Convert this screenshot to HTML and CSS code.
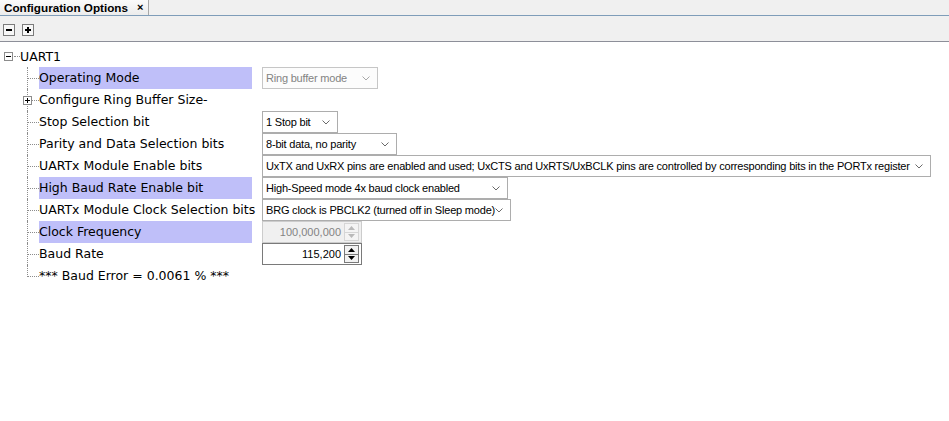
FILE: index.html
```html
<!DOCTYPE html>
<html>
<head>
<meta charset="utf-8">
<link rel="stylesheet" href="styles.css">
</head>
<body>
<div class="tabbar">
  <div class="tab"><span class="tab-title">Configuration Options</span><span class="tab-close">×</span></div>
</div>
<div class="toolbar">
  <span class="tb-btn"><svg width="12" height="12" viewBox="0 0 12 12"><rect x="0.5" y="0.5" width="11" height="11" fill="#f7f7f7" stroke="#7b7b7b"/><rect x="3" y="5" width="6" height="2" fill="#000"/></svg></span>
  <span class="tb-btn"><svg width="12" height="12" viewBox="0 0 12 12"><rect x="0.5" y="0.5" width="11" height="11" fill="#f7f7f7" stroke="#7b7b7b"/><rect x="3" y="5" width="6" height="2" fill="#000"/><rect x="5" y="3" width="2" height="6" fill="#000"/></svg></span>
</div>
<div class="tree">
  <div class="root">
    <span class="exp root-exp"><svg width="9" height="9" viewBox="0 0 9 9"><rect x="0.5" y="0.5" width="8" height="8" fill="#fff" stroke="#8c8c8c"/><rect x="2" y="4" width="5" height="1" fill="#000"/></svg></span>
    <span class="root-line"></span>
    <span class="root-label">UART1</span>
  </div>
  <div class="children">
    <div class="row">
      <span class="label hl">Operating Mode</span>
      <div class="combo disabled w-ring"><span class="combo-text">Ring buffer mode</span><svg class="chev" width="8" height="5" viewBox="0 0 8 5"><polyline points="0.5,0.5 4,4 7.5,0.5" fill="none" stroke="#a8a8a8"/></svg></div>
    </div>
    <div class="row">
      <span class="exp child-exp"><svg width="9" height="9" viewBox="0 0 9 9"><rect x="0.5" y="0.5" width="8" height="8" fill="#fff" stroke="#8c8c8c"/><rect x="2" y="4" width="5" height="1" fill="#000"/><rect x="4" y="2" width="1" height="5" fill="#000"/></svg></span>
      <span class="label">Configure Ring Buffer Size-</span>
    </div>
    <div class="row">
      <span class="label">Stop Selection bit</span>
      <div class="combo w-stop"><span class="combo-text">1 Stop bit</span><svg class="chev" width="8" height="5" viewBox="0 0 8 5"><polyline points="0.5,0.5 4,4 7.5,0.5" fill="none" stroke="#6a6a6a"/></svg></div>
    </div>
    <div class="row">
      <span class="label">Parity and Data Selection bits</span>
      <div class="combo w-parity"><span class="combo-text">8-bit data, no parity</span><svg class="chev" width="8" height="5" viewBox="0 0 8 5"><polyline points="0.5,0.5 4,4 7.5,0.5" fill="none" stroke="#6a6a6a"/></svg></div>
    </div>
    <div class="row">
      <span class="label">UARTx Module Enable bits</span>
      <div class="combo w-enable"><span class="combo-text">UxTX and UxRX pins are enabled and used; UxCTS and UxRTS/UxBCLK pins are controlled by corresponding bits in the PORTx register</span><svg class="chev" width="8" height="5" viewBox="0 0 8 5"><polyline points="0.5,0.5 4,4 7.5,0.5" fill="none" stroke="#6a6a6a"/></svg></div>
    </div>
    <div class="row">
      <span class="label hl">High Baud Rate Enable bit</span>
      <div class="combo w-baud"><span class="combo-text">High-Speed mode 4x baud clock enabled</span><svg class="chev" width="8" height="5" viewBox="0 0 8 5"><polyline points="0.5,0.5 4,4 7.5,0.5" fill="none" stroke="#6a6a6a"/></svg></div>
    </div>
    <div class="row">
      <span class="label">UARTx Module Clock Selection bits</span>
      <div class="combo w-brg"><span class="combo-text">BRG clock is PBCLK2 (turned off in Sleep mode)</span><svg class="chev" width="8" height="5" viewBox="0 0 8 5"><polyline points="0.5,0.5 4,4 7.5,0.5" fill="none" stroke="#6a6a6a"/></svg></div>
    </div>
    <div class="row">
      <span class="label hl">Clock Frequency</span>
      <div class="spin disabled">
        <span class="spin-text">100,000,000</span>
        <span class="spin-btns">
          <span class="spin-btn"><svg width="7" height="4" viewBox="0 0 7 4"><polygon points="3.5,0 7,4 0,4" fill="#b9b9b9"/></svg></span>
          <span class="spin-btn"><svg width="7" height="4" viewBox="0 0 7 4"><polygon points="0,0 7,0 3.5,4" fill="#b9b9b9"/></svg></span>
        </span>
      </div>
    </div>
    <div class="row">
      <span class="label">Baud Rate</span>
      <div class="spin">
        <span class="spin-text">115,200</span>
        <span class="spin-btns">
          <span class="spin-btn"><svg width="7" height="4" viewBox="0 0 7 4"><polygon points="3.5,0 7,4 0,4" fill="#000"/></svg></span>
          <span class="spin-btn"><svg width="7" height="4" viewBox="0 0 7 4"><polygon points="0,0 7,0 3.5,4" fill="#000"/></svg></span>
        </span>
      </div>
    </div>
    <div class="row">
      <span class="label">*** Baud Error = 0.0061 % ***</span>
    </div>
  </div>
</div>
</body>
</html>
```
FILE: styles.css
```css
* { box-sizing: border-box; }
body {
  margin: 0;
  background: #ffffff;
  font-family: "DejaVu Sans", Verdana, sans-serif;
  font-size: 12.5px;
  color: #000;
}
.tabbar {
  height: 16px;
  background: #f0f0f0;
  border-bottom: 1px solid #7f9db9;
  display: flex;
}
.tab {
  height: 15px;
  display: flex;
  align-items: center;
  padding: 0 5px 0 4px;
  gap: 9px;
  border-right: 1px solid #a8a8a8;
  background: linear-gradient(#fbfbfb, #ececec);
}
.tab-title {
  font-family: "Liberation Sans", Arial, sans-serif;
  font-weight: bold;
  font-size: 11.7px;
  line-height: 15px;
}
.tab-close {
  font-family: "Liberation Sans", Arial, sans-serif;
  font-weight: bold;
  font-size: 11px;
  line-height: 15px;
}
.toolbar {
  height: 26px;
  background: #f0f0f0;
  border-bottom: 1px solid #8d8f99;
  display: flex;
  align-items: center;
  gap: 7px;
  padding: 3px 0 0 3px;
}
.tb-btn { display: flex; width: 12px; height: 12px; }
.tree { padding-top: 3px; }
.root {
  height: 22px;
  display: flex;
  align-items: center;
  padding-left: 4px;
}
.exp { display: flex; width: 9px; height: 9px; }
.root-exp { margin-top: 1px; }
.root-line {
  width: 6px;
  margin-left: 1px;
  border-top: 1px dotted #8c8c8c;
}
.root-label { padding-left: 0; }
.children { margin-left: 27px; }
.row {
  position: relative;
  height: 22px;
  display: flex;
  align-items: center;
  padding-left: 12px;
}
.row::before {
  content: "";
  position: absolute;
  left: 0;
  top: 0;
  bottom: 0;
  border-left: 1px dotted #8c8c8c;
}
.row:last-child::before { bottom: 10px; }
.row::after {
  content: "";
  position: absolute;
  left: 1px;
  top: 11px;
  width: 11px;
  border-top: 1px dotted #8c8c8c;
}
.child-exp {
  position: absolute;
  left: -4px;
  top: 7px;
  z-index: 1;
}
.label {
  width: 213px;
  height: 22px;
  line-height: 22px;
  padding-left: 0;
  white-space: nowrap;
  flex: none;
}
.hl { background: #bfbff9; }
.combo, .spin {
  margin-left: 10px;
  height: 22px;
  border: 1px solid #adadad;
  background: #fff;
  display: flex;
  align-items: center;
  font-family: "Liberation Sans", Arial, sans-serif;
  font-size: 11px;
  letter-spacing: -0.2px;
  flex: none;
}
.combo { padding: 0 7px 0 3px; }
.combo-text { white-space: nowrap; }
.chev { margin-left: auto; flex: none; }
.combo.disabled { border-color: #c6c6c6; color: #838383; background: #fcfcfc; }
.w-ring { width: 116px; }
.w-stop { width: 76px; }
.w-parity { width: 135px; }
.w-enable { width: 669px; }
.w-baud { width: 246px; }
.w-brg { width: 249px; }
.spin {
  width: 100px;
  border-color: #7a7a7a;
  padding: 1px 1px 1px 0;
  align-items: stretch;
  letter-spacing: 0;
}
.spin-text {
  flex: 1;
  text-align: right;
  padding-right: 3px;
  line-height: 18px;
}
.spin-btns {
  width: 15px;
  display: flex;
  flex-direction: column;
  border: 1px solid #7a7a7a;
  margin-right: 1px;
}
.spin-btn {
  flex: 1;
  display: flex;
  align-items: center;
  justify-content: center;
  background: #f2f2f2;
}
.spin-btn + .spin-btn { border-top: 1px solid #7a7a7a; }
.spin.disabled { background: #f0f0f0; border-color: #cccccc; color: #838383; }
.spin.disabled .spin-btns { border-color: #d6d6d6; }
.spin.disabled .spin-btn { background: #f4f4f4; }
.spin.disabled .spin-btn + .spin-btn { border-top-color: #d6d6d6; }
```
